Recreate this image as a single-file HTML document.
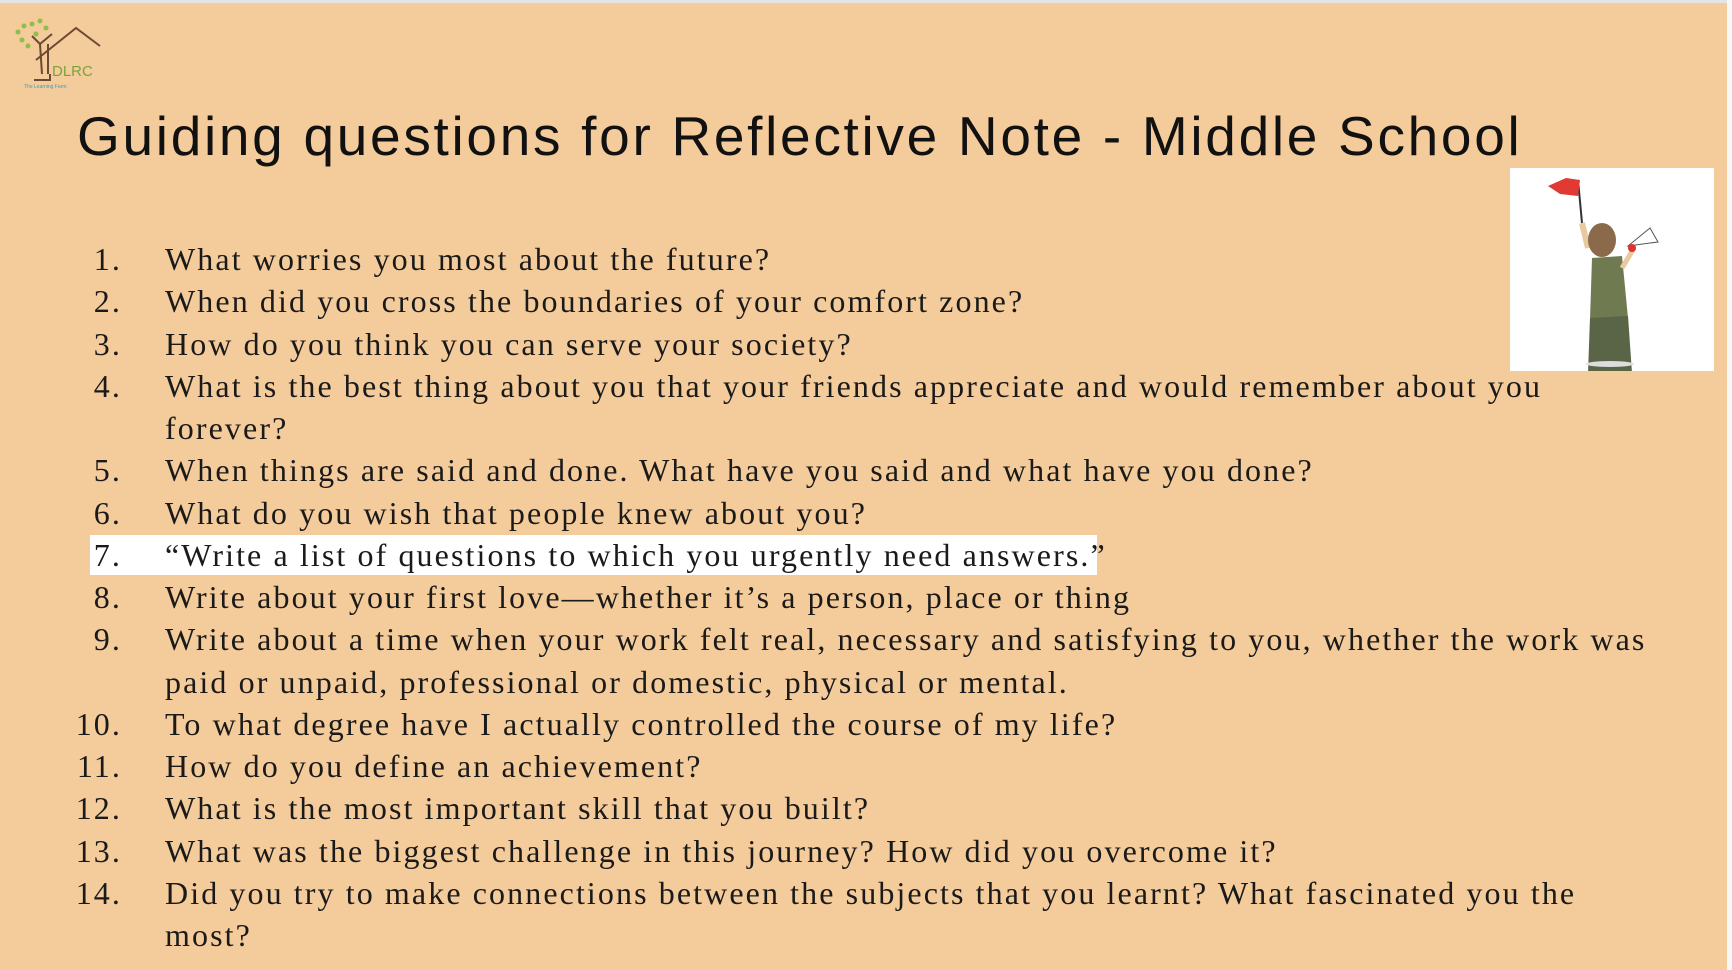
<!DOCTYPE html>
<html><head><meta charset="utf-8"><style>
html,body{margin:0;padding:0;}
body{width:1732px;height:970px;background:#f4cb9a;position:relative;overflow:hidden;font-family:"Liberation Serif",serif;color:#1a1a1a;}
.topline{position:absolute;left:0;top:0;width:1732px;height:3px;background:#e4e4e4;}
.rightline{position:absolute;right:0;top:0;width:5px;height:970px;background:#f7f7f7;}
h1{position:absolute;left:77px;top:103px;margin:0;font-family:"Liberation Sans",sans-serif;font-weight:normal;font-size:55px;line-height:66px;letter-spacing:2.7px;color:#111;}
.pic{position:absolute;left:1510px;top:168px;width:204px;height:203px;background:#fff;}
.hl{position:absolute;left:90px;top:535px;width:1007px;height:40px;background:#fff;}
.list{position:absolute;left:0;top:238px;}
.row{position:relative;height:42.25px;line-height:42.25px;font-size:32px;white-space:nowrap;letter-spacing:2.1px;}
.row .n{position:absolute;left:20px;text-align:right;width:102px;}
.t{position:absolute;left:165px;}
</style></head><body>
<div class="topline"></div><div class="rightline"></div>
<svg style="position:absolute;left:12px;top:14px" width="92" height="80" viewBox="0 0 92 80">
<g fill="#8cc04a"><circle cx="6" cy="18" r="2.5"/><circle cx="12" cy="12" r="2.5"/><circle cx="20" cy="10" r="2.5"/><circle cx="28" cy="7" r="2.5"/><circle cx="34" cy="14" r="2.5"/><circle cx="10" cy="26" r="2.5"/><circle cx="24" cy="20" r="2.5"/><circle cx="16" cy="32" r="2.5"/></g>
<g stroke="#6b4a33" stroke-width="2" fill="none"><path d="M30 60 L28 30 L20 22 M28 30 L40 20"/><path d="M36 60 L36 30"/><path d="M24 46 L64 14 L88 32"/><path d="M22 66 L38 66 L38 60"/></g>
<text x="40" y="62" font-family="Liberation Sans,sans-serif" font-size="15" fill="#7aa43a">DLRC</text>
<text x="12" y="74" font-family="Liberation Sans,sans-serif" font-size="5" fill="#3aa0c0">The Learning Farm</text>
</svg>
<h1>Guiding questions for Reflective Note - Middle School</h1>
<div class="pic">
<svg width="204" height="203" viewBox="0 0 204 203">
<line x1="68" y1="12" x2="72" y2="55" stroke="#333" stroke-width="2"/>
<path d="M38 18 L56 10 L70 12 L68 28 L50 26 Z" fill="#e03a33"/>
<path d="M72 55 L78 80" stroke="#e8c9a0" stroke-width="6"/>
<ellipse cx="92" cy="72" rx="14" ry="17" fill="#8b6a4b"/>
<path d="M82 90 L112 88 L118 150 L80 152 Z" fill="#6f7a50"/>
<path d="M80 150 L118 148 L122 205 L78 205 Z" fill="#5a6446"/>
<path d="M112 100 L124 80" stroke="#e8c9a0" stroke-width="5"/>
<path d="M118 78 L140 60 L148 74 Z" fill="#fff" stroke="#555"/>
<circle cx="122" cy="80" r="4" fill="#d33"/>
<ellipse cx="100" cy="196" rx="24" ry="3" fill="#ddd"/>
</svg>
</div>
<div class="hl"></div>
<div class="list">
<div class="row"><span class="n">1.</span><span class="t">What worries you most about the future?</span></div>
<div class="row"><span class="n">2.</span><span class="t">When did you cross the boundaries of your comfort zone?</span></div>
<div class="row"><span class="n">3.</span><span class="t">How do you think you can serve your society?</span></div>
<div class="row"><span class="n">4.</span><span class="t">What is the best thing about you that your friends appreciate and would remember about you</span></div>
<div class="row"><span class="t">forever?</span></div>
<div class="row"><span class="n">5.</span><span class="t">When things are said and done. What have you said and what have you done?</span></div>
<div class="row"><span class="n">6.</span><span class="t">What do you wish that people knew about you?</span></div>
<div class="row"><span class="n">7.</span><span class="t">“Write a list of questions to which you urgently need answers.”</span></div>
<div class="row"><span class="n">8.</span><span class="t">Write about your first love—whether it’s a person, place or thing</span></div>
<div class="row"><span class="n">9.</span><span class="t">Write about a time when your work felt real, necessary and satisfying to you, whether the work was</span></div>
<div class="row"><span class="t">paid or unpaid, professional or domestic, physical or mental.</span></div>
<div class="row"><span class="n">10.</span><span class="t">To what degree have I actually controlled the course of my life?</span></div>
<div class="row"><span class="n">11.</span><span class="t">How do you define an achievement?</span></div>
<div class="row"><span class="n">12.</span><span class="t">What is the most important skill that you built?</span></div>
<div class="row"><span class="n">13.</span><span class="t">What was the biggest challenge in this journey? How did you overcome it?</span></div>
<div class="row"><span class="n">14.</span><span class="t">Did you try to make connections between the subjects that you learnt? What fascinated you the</span></div>
<div class="row"><span class="t">most?</span></div>
</div>
</body></html>
